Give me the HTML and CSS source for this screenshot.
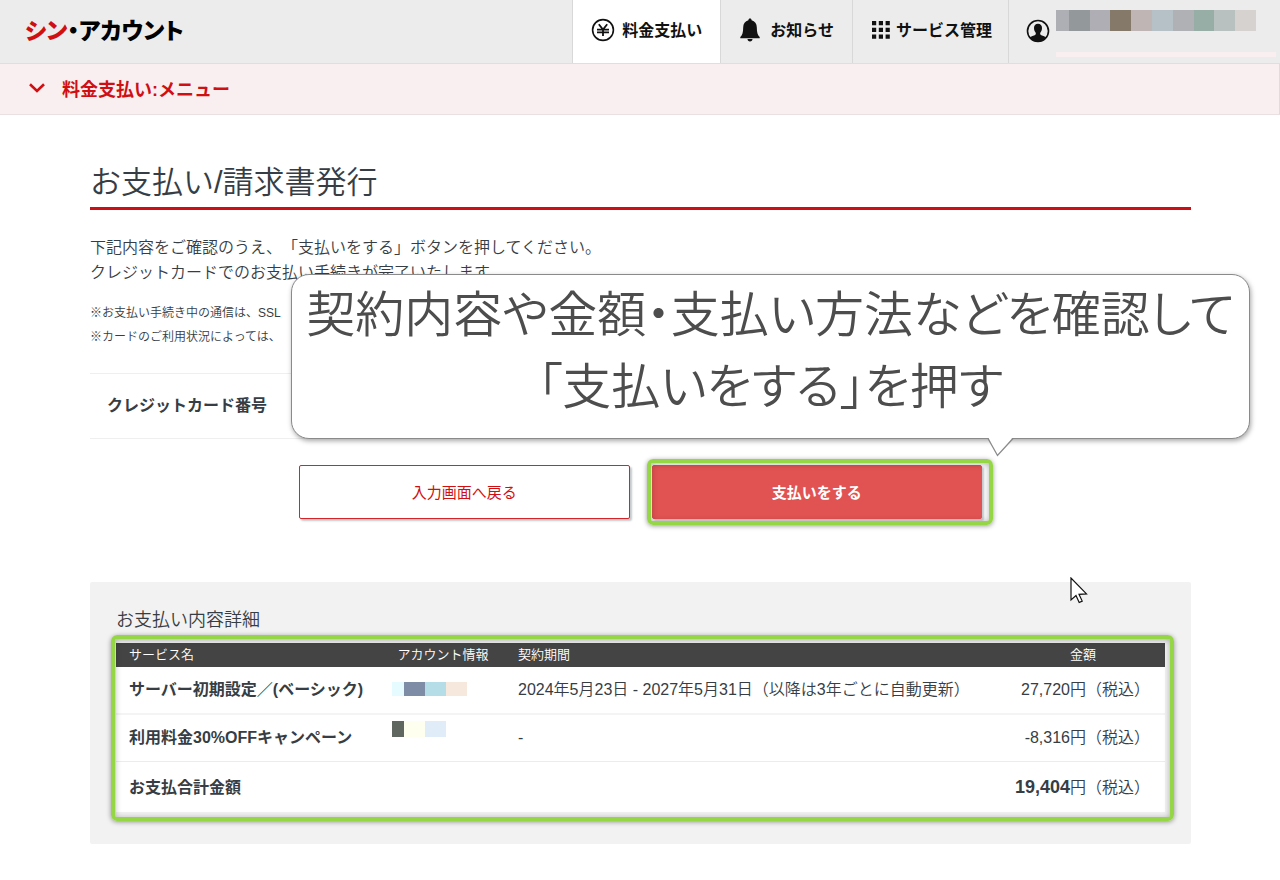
FILE: index.html
```html
<!DOCTYPE html>
<html lang="ja">
<head>
<meta charset="utf-8">
<title>お支払い/請求書発行</title>
<link rel="stylesheet" href="styles.css">
</head>
<body>
<header class="header">
  <a class="logo" href="#"><span class="logo-accent">シン</span>・アカウント</a>
  <nav class="nav">
    <a class="nav-item nav-item-active" href="#">
      <svg class="icon" width="24" height="24" viewBox="0 0 24 24" fill="none" stroke="#111"><circle cx="12" cy="12" r="10.4" stroke-width="1.6"/><path d="M7.8 6.2 12 11.6 16.2 6.2M12 11.6V18M6 11.6H18M6 14.4H18" stroke-width="1.8"/></svg>
      料金支払い
    </a>
    <a class="nav-item nav-item-news" href="#">
      <svg class="icon" width="20" height="24" viewBox="0 0 20 24" fill="#111"><path d="M10 .6c1 0 1.500.6 1.600 1.600 3.200.8 5.200 3.400 5.200 7 0 5.200.9 8 2.900 9.800v1.200H.3V19c2-1.800 2.900-4.600 2.900-9.800 0-3.600 2-6.200 5.200-7C8.500 1.200 9 .6 10 .6ZM7.500 21h5c0 1.400-1 2.500-2.500 2.500S7.500 22.400 7.500 21Z"/></svg>
      お知らせ
    </a>
    <a class="nav-item nav-item-service" href="#">
      <svg class="icon" width="18" height="18" viewBox="0 0 18 18" fill="#111"><path d="M0 0h4.200v4.200H0zM6.800 0H11v4.200H6.800zM13.600 0h4.200v4.200h-4.200zM0 6.800h4.200V11H0zM6.800 6.800H11V11H6.800zM13.600 6.800h4.200V11h-4.200zM0 13.600h4.200v4.200H0zM6.800 13.600H11v4.200H6.800zM13.600 13.600h4.200v4.200h-4.200z"/></svg>
      サービス管理
    </a>
    <a class="nav-user" href="#" aria-label="アカウント">
      <svg class="icon" width="24" height="24" viewBox="0 0 24 24"><circle cx="12" cy="12" r="10.500" fill="none" stroke="#111" stroke-width="1.600"/><path d="M12 4.800c2.600 0 4 1.800 4 4.200 0 2-.8 3.700-1.700 4.800-.4 1.200 0 2 1 2.400 2 .7 3.900 1.200 5 2.500A11 11 0 0 1 12 23a11 11 0 0 1-8.300-4.300c1.100-1.300 3-1.800 5-2.500 1-.4 1.400-1.200 1-2.400C8.800 12.700 8 11 8 9c0-2.400 1.400-4.200 4-4.200Z" fill="#111"/></svg>
      <span class="user-info">
        <span class="mosaic mosaic-user"><i class="c1"></i><i class="c2"></i><i class="c3"></i><i class="c4"></i><i class="c5"></i><i class="c6"></i><i class="c7"></i><i class="c8"></i><i class="c9"></i><i class="c10"></i></span>
        <span class="user-strip"></span>
      </span>
    </a>
  </nav>
</header>

<button class="submenu" type="button">
  <svg width="16" height="10" viewBox="0 0 16 10" fill="none" stroke="#d00f12" stroke-width="2.600"><path d="M1 1.200 8 8 15 1.200"/></svg>
  料金支払い:メニュー
</button>

<main class="main">
  <h1 class="title">お支払い/請求書発行</h1>
  <p class="lead">下記内容をご確認のうえ、「支払いをする」ボタンを押してください。<br>クレジットカードでのお支払い手続きが完了いたします。</p>
  <p class="notes">※お支払い手続き中の通信は、SSL<br>※カードのご利用状況によっては、</p>
  <div class="card-row">クレジットカード番号</div>

  <div class="actions">
    <button class="button button-back" type="button">入力画面へ戻る</button>
    <div class="pay">
      <button class="button button-pay" type="button">支払いをする</button>
      <span class="marker marker-pay"></span>
    </div>
  </div>

  <section class="panel">
    <h2 class="panel-title">お支払い内容詳細</h2>
    <div class="details">
      <table class="table">
        <thead>
          <tr><th class="col-name" scope="col">サービス名</th><th class="col-account" scope="col">アカウント情報</th><th class="col-term" scope="col">契約期間</th><th class="col-price" scope="col">金額</th></tr>
        </thead>
        <tbody>
          <tr class="row-first">
            <th scope="row">サーバー初期設定／(ベーシック)</th>
            <td><span class="mosaic mosaic-a"><i class="a1"></i><i class="a2"></i><i class="a3"></i><i class="a4"></i></span></td>
            <td>2024年5月23日 - 2027年5月31日（以降は3年ごとに自動更新）</td>
            <td class="price">27,720円（税込）</td>
          </tr>
          <tr class="row-second">
            <th scope="row">利用料金30%OFFキャンペーン</th>
            <td class="cell-top"><span class="mosaic mosaic-b"><i class="b1"></i><i class="b2"></i><i class="b3"></i></span></td>
            <td>-</td>
            <td class="price">-8,316円（税込）</td>
          </tr>
          <tr class="row-total">
            <th scope="row" colspan="3">お支払合計金額</th>
            <td class="price"><strong class="total">19,404</strong>円（税込）</td>
          </tr>
        </tbody>
      </table>
      <span class="marker marker-table"></span>
    </div>
  </section>

  <div class="callout">
    契約内容や金額・支払い方法などを確認して<br>「支払いをする」を押す
    <svg class="callout-tail" width="28" height="20" viewBox="0 0 28 20"><path d="M1 0 11 18.500 26 0Z" fill="#fff"/><path d="M1 1.500 10.500 18.500 26 1.500" fill="none" stroke="#8a8a8a" stroke-width="1.300"/></svg>
  </div>
  <svg class="cursor" width="18" height="28" viewBox="0 0 18 28"><path d="M1 1v22l5-4.500 3.200 7 3-1.400-3.200-6.800 7.500-.4Z" fill="#fff" stroke="#111" stroke-width="1.200"/></svg>
</main>
</body>
</html>
```

FILE: styles.css
```css
* { box-sizing: border-box; }

body {
  margin: 0;
  background: #fff;
  color: #363d44;
  font-family: "Liberation Sans", "Noto Sans CJK JP", sans-serif;
  font-size: 16px;
  font-weight: 350;
  line-height: 25px;
  text-spacing-trim: space-all;
}

a { color: inherit; text-decoration: none; }

button { font-family: inherit; cursor: pointer; }

.header {
  display: flex;
  justify-content: space-between;
  height: 64px;
  background: #ececec;
  border-bottom: 1px solid #dfdfdf;
}

.logo {
  display: flex;
  align-items: center;
  padding: 0 0 4px 25px;
  color: #000;
  font-family: "Noto Sans CJK JP", sans-serif;
  font-size: 23px;
  font-weight: 900;
  font-feature-settings: "palt";
}

.logo-accent { color: #d00f12; }

.nav { display: flex; color: #111; font-weight: 700; }

.nav-item {
  display: flex;
  align-items: center;
  gap: 7px;
  padding: 0 18px 3px;
  border-left: 1px solid #d8d8d8;
}

.nav-item-active { background: #fff; }
.nav-item-news { gap: 10px; padding-left: 19px; }
.nav-item-service { gap: 6px; padding: 0 16px 3px 19px; }

.nav-user {
  display: flex;
  width: 272px;
  padding-left: 17px;
  gap: 6px;
  border-left: 1px solid #d8d8d8;
}

.nav-user .icon { flex: none; margin-top: 19px; }

.user-info { flex: 1; padding: 10px 4px 0 0; }

.mosaic { display: flex; }
.mosaic i { width: 21px; }

.mosaic-user { width: 200px; height: 21px; }
.mosaic-user i { flex: 21; }
.mosaic-user .c1 { flex: 13; background: #aeafb5; }
.c2 { background: #93989b; }
.c3 { background: #afaeb5; }
.c4 { background: #85796a; }
.c5 { background: #bfb5b4; }
.c6 { background: #b5c1c7; }
.c7 { background: #b0b1b4; }
.c8 { background: #96aea5; }
.c9 { background: #b9c1c0; }
.c10 { background: #d6d2cf; }

.user-strip {
  display: block;
  height: 5px;
  margin-top: 21px;
  background: #f9eff0;
}

.submenu {
  display: flex;
  align-items: center;
  gap: 17px;
  width: 100%;
  height: 51px;
  padding: 0 29px 2px;
  border: 0;
  border-right: 1px solid #e2dadb;
  border-bottom: 1px solid #ebe0e1;
  background: #f9eff0;
  color: #d00f12;
  font-size: 18px;
  font-weight: 700;
}

.main { position: relative; padding: 47px 89px 36px 90px; }

.title {
  margin: 0;
  padding-bottom: 3px;
  border-bottom: 3px solid #cc0f14;
  font-size: 31px;
  font-weight: 350;
  line-height: 42px;
}

.lead { margin: 25px 0 16px; }

.notes { margin: 0; font-size: 12px; line-height: 24px; }

.card-row {
  margin-top: 24px;
  padding: 19px 17px 20px;
  border-top: 1px solid #efefef;
  border-bottom: 1px solid #efefef;
  font-weight: 700;
}

.actions {
  display: flex;
  justify-content: center;
  gap: 22px;
  margin-top: 26px;
}

.button {
  width: 100%;
  height: 54px;
  padding-bottom: 2px;
  border: 1px solid #d2262b;
  border-radius: 2px;
  box-shadow: 2px 2px 2px #c5c9cb;
  font-size: 15px;
}

.button-back { width: 30%; background: #fff; color: #d00f12; }
.button-pay { border-color: #e15252; background: #e15252; color: #fff; font-weight: 700; }

.pay { position: relative; width: 30%; }

.marker {
  position: absolute;
  border: 4px solid #95d646;
  border-radius: 6px;
  box-shadow: 0 1px 5px rgba(0, 0, 0, .4), inset 0 1px 6px rgba(0, 0, 0, .3);
  pointer-events: none;
}

.marker-pay { inset: -6px -11px -6px -5px; }
.marker-table { inset: -8px -9px -9px -5px; }

.panel {
  margin-top: 63px;
  padding: 26px 26px 32px;
  border-radius: 2px;
  background: #f2f2f2;
}

.panel-title { margin: 0 0 10px; font-size: 18px; font-weight: 350; line-height: 25px; }

.details { position: relative; }

.table {
  width: 100%;
  table-layout: fixed;
  border-collapse: separate;
  border-spacing: 0;
  background: #fff;
}

.table th, .table td { padding: 0 12px; text-align: left; white-space: nowrap; }
.table th:first-child { padding-left: 13px; }

.table thead th {
  height: 24px;
  background: #444;
  color: #fff;
  font-size: 13px;
  font-weight: 350;
  line-height: 24px;
}

.table .col-name { width: 264px; }
.table .col-account { width: 126px; text-align: center; }
.table .col-price { width: 164px; text-align: center; }

.table tbody th, .table tbody td { height: 47px; border-bottom: 1px solid #ececec; }
.table .row-first th, .table .row-first td { height: 48px; padding-bottom: 2px; border-bottom: 2px solid #f4f4f4; }
.table .row-second th, .table .row-second td { padding-bottom: 2px; }
.table .row-total th, .table .row-total td { height: 50px; border-bottom: 0; }
.table .price { padding-right: 15px; text-align: right; }
.table .cell-top { padding-top: 6px; vertical-align: top; }

.total { font-size: 18px; }

.mosaic-a { height: 14px; }
.mosaic .a1 { width: 12px; background: #e6fbff; }
.a2 { background: #7f8ca5; }
.a3 { background: #b5dde7; }
.a4 { background: #f7e8de; }

.mosaic-b { height: 16px; }
.mosaic .b1 { width: 12px; background: #606660; }
.b2 { background: #fffff0; }
.b3 { background: #e0ecf8; }

.callout {
  position: absolute;
  top: 159px;
  left: 291px;
  right: 30px;
  padding: 0 0 19px;
  border: 1px solid #8a8a8a;
  border-radius: 18px;
  background: #fff;
  box-shadow: 1px 2px 5px rgba(0, 0, 0, .35);
  color: #4d4d4d;
  font-family: "Noto Sans CJK JP", sans-serif;
  font-size: 49px;
  font-weight: 350;
  font-feature-settings: "palt";
  line-height: 72px;
  text-align: center;
  white-space: nowrap;
}

.callout-tail { position: absolute; top: 162px; right: 234px; }

.cursor { position: absolute; top: 462px; right: 192px; }
```
